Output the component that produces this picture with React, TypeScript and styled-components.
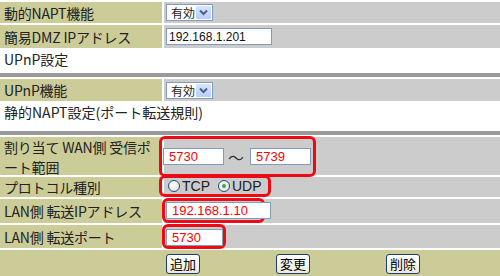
import React from "react";
import styled, { createGlobalStyle } from "styled-components";

const GlobalStyle = createGlobalStyle`
  html, body {
    margin: 0;
    padding: 0;
    background: #ffffff;
  }
  body {
    font-family: "Noto Sans CJK JP", "Liberation Sans", sans-serif;
    color: #222222;
  }
`;

const OLIVE = "#cccc99";
const GREY = "#cccccc";
const MARK = "#ee0a14";

const Page = styled.div`
  width: 500px;
  height: 276px;
  overflow: hidden;
`;

const Table = styled.div<{ $bar?: boolean }>`
  display: grid;
  grid-template-columns: 162px 1fr;
  column-gap: 2px;
  row-gap: 2px;
  padding-top: 2px;
  border-top: ${(p) => (p.$bar ? "4px solid #999999" : "none")};
`;

const Label = styled.div<{ $h: number }>`
  height: ${(p) => p.$h}px;
  background: ${OLIVE};
  display: flex;
  align-items: center;
  padding: 0 4px;
  font-size: 14px;
  line-height: 20px;
  white-space: nowrap;
  letter-spacing: -0.2px;
`;

const LabelLines = styled.span`
  display: flex;
  flex-direction: column;
  margin-top: 1px;
`;

const Value = styled.div<{ $h: number }>`
  height: ${(p) => p.$h}px;
  background: ${GREY};
  display: flex;
  align-items: center;
  padding-left: 2px;
`;

const Heading = styled.div<{ $h: number }>`
  height: ${(p) => p.$h}px;
  padding: 1px 4px 0;
  font-size: 14px;
  line-height: 20px;
  box-sizing: border-box;
  white-space: nowrap;
`;

const Select = styled.div`
  width: 47px;
  height: 17px;
  box-sizing: border-box;
  border: 1px solid #7f9db9;
  background: #ffffff;
  display: flex;
  align-items: center;
  font-size: 12px;
  padding-left: 4px;
`;

const SelectText = styled.span`
  flex: 1;
  line-height: 15px;
  white-space: nowrap;
`;

const SelectArrow = styled.span`
  width: 15px;
  height: 13px;
  margin-right: 1px;
  background: linear-gradient(#d9e4fe, #b8cdfb);
  border-radius: 1px;
  display: flex;
  align-items: center;
  justify-content: center;
  flex-shrink: 0;
`;

const Field = styled.span<{ $w: number; $red?: boolean; $size?: number }>`
  display: inline-flex;
  align-items: center;
  width: ${(p) => p.$w}px;
  height: 17px;
  box-sizing: border-box;
  border: 1px solid #7f9db9;
  background: #ffffff;
  padding-left: ${(p) => (p.$red ? 5 : 2)}px;
  font-family: "Liberation Sans", Arial, sans-serif;
  font-size: ${(p) => p.$size ?? 12}px;
  color: ${(p) => (p.$red ? "#ff0000" : "#111111")};
  flex-shrink: 0;
  white-space: nowrap;
`;

const Mark = styled.div<{ $ml: number; $pad: string; $mt?: number }>`
  display: flex;
  align-items: center;
  border: 3px solid ${MARK};
  border-radius: 6px;
  margin-left: ${(p) => p.$ml}px;
  margin-top: ${(p) => p.$mt ?? 0}px;
  padding: ${(p) => p.$pad};
`;

const Tilde = styled.span`
  font-size: 16px;
  color: #333333;
  padding: 0 6px 0 4px;
`;

const RadioItem = styled.label<{ $last?: boolean }>`
  display: inline-flex;
  align-items: center;
  font-family: "Liberation Sans", Arial, sans-serif;
  font-size: 14px;
  gap: 2px;
  margin-right: ${(p) => (p.$last ? 0 : 8)}px;
`;

const RadioDot = styled.span<{ $on?: boolean }>`
  width: 12px;
  height: 12px;
  box-sizing: border-box;
  border-radius: 50%;
  border: 1px solid #1c5180;
  background: radial-gradient(circle at 40% 35%, #ffffff, #dcdcd6);
  display: inline-flex;
  align-items: center;
  justify-content: center;
  &::after {
    content: "";
    display: ${(p) => (p.$on ? "block" : "none")};
    width: 4px;
    height: 4px;
    border-radius: 50%;
    background: #3fa33f;
  }
`;

const ButtonRow = styled.div`
  grid-column: 1 / -1;
  height: 27px;
  background: ${OLIVE};
  display: grid;
  grid-template-columns: 166px 110px 110px 1fr;
  align-items: center;
`;

const Btn = styled.button<{ $col: number }>`
  grid-column: ${(p) => p.$col};
  justify-self: start;
  height: 20px;
  padding: 0 3px;
  font-family: "Noto Sans CJK JP", sans-serif;
  font-size: 13px;
  line-height: 16px;
  color: #000000;
  border: 1px solid #1b3d6f;
  border-radius: 3px;
  background: linear-gradient(#ffffff, #ece9d8);
`;

const Chevron = () => (
  <svg width="9" height="7" viewBox="0 0 9 7">
    <path d="M1 1.5 L4.5 5 L8 1.5" fill="none" stroke="#4d6185" strokeWidth="2" />
  </svg>
);

const FakeSelect = ({ value }: { value: string }) => (
  <Select>
    <SelectText>{value}</SelectText>
    <SelectArrow>
      <Chevron />
    </SelectArrow>
  </Select>
);

export default function App() {
  return (
    <Page>
      <GlobalStyle />
      <Table>
        <Label $h={21}>動的NAPT機能</Label>
        <Value $h={21}>
          <FakeSelect value="有効" />
        </Value>
        <Label $h={23}>簡易DMZ IPアドレス</Label>
        <Value $h={23}>
          <Field $w={106}>192.168.1.201</Field>
        </Value>
      </Table>
      <Heading $h={25}>UPnP設定</Heading>
      <Table $bar>
        <Label $h={22}>UPnP機能</Label>
        <Value $h={22}>
          <FakeSelect value="有効" />
        </Value>
      </Table>
      <Heading $h={30}>静的NAPT設定(ポート転送規則)</Heading>
      <Table $bar>
        <Label $h={38}>
          <LabelLines>
            <span>割り当て WAN側 受信ポ</span>
            <span>ート範囲</span>
          </LabelLines>
        </Label>
        <Value $h={38}>
          <Mark $ml={-7} $pad="6px 2px 5px 1px">
            <Field $w={61} $red $size={13}>5730</Field>
            <Tilde>〜</Tilde>
            <Field $w={61} $red $size={13}>5739</Field>
          </Mark>
        </Value>
        <Label $h={20}>プロトコル種別</Label>
        <Value $h={20}>
          <Mark $ml={-7} $pad="0 6px 0 6px" $mt={-2}>
            <RadioItem>
              <RadioDot />
              TCP
            </RadioItem>
            <RadioItem $last>
              <RadioDot $on />
              UDP
            </RadioItem>
          </Mark>
        </Value>
        <Label $h={24}>LAN側 転送IPアドレス</Label>
        <Value $h={24}>
          <Mark $ml={-4} $pad="1px 0 1px 1px" $mt={-1}>
            <Field $w={105} $red $size={13} style={{ marginRight: -9 }}>
              192.168.1.10
            </Field>
          </Mark>
        </Value>
        <Label $h={23}>LAN側 転送ポート</Label>
        <Value $h={23}>
          <Mark $ml={-4} $pad="2px 0 0 1px" $mt={-1}>
            <Field $w={57} $red $size={13}>5730</Field>
          </Mark>
        </Value>
        <ButtonRow>
          <Btn $col={2}>追加</Btn>
          <Btn $col={3}>変更</Btn>
          <Btn $col={4}>削除</Btn>
        </ButtonRow>
      </Table>
    </Page>
  );
}
